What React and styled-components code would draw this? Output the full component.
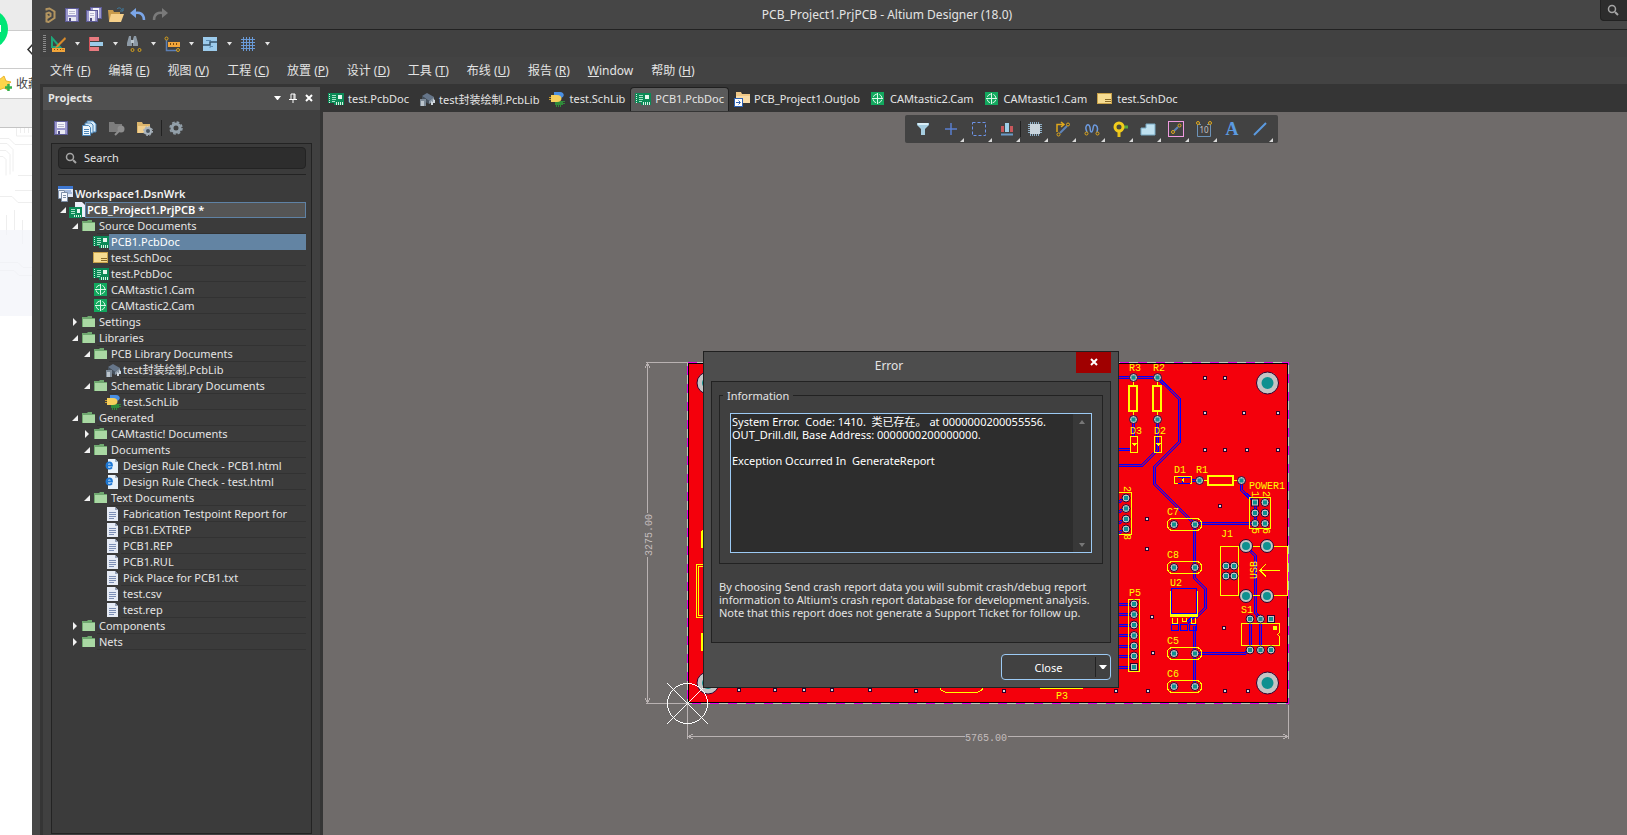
import React from 'react';
import styled, { createGlobalStyle, css } from 'styled-components';

const GlobalStyle = createGlobalStyle`
  * { box-sizing: border-box; }
  html, body, #root { height: 100%; }
  body {
    margin: 0;
    overflow: hidden;
    background: #ffffff;
    font-family: "Noto Sans", "Noto Sans CJK SC", sans-serif;
    font-size: 11px;
    color: #e4e4e4;
  }
  button, input, textarea { font: inherit; color: inherit; }
  svg { display: block; flex: none; }
`;

/* ---------- shell ---------- */

const Desktop = styled.div`
  display: flex;
  height: 100vh;
`;

const BrowserStrip = styled.aside`
  flex: none;
  width: 32px;
  overflow: hidden;
  background: #ffffff;
`;

const AppWindow = styled.div`
  position: relative;
  flex: 1;
  min-width: 0;
  display: flex;
  flex-direction: column;
  padding-left: 8px;
  background: #464646;
`;

const TitleBar = styled.header`
  flex: none;
  display: flex;
  align-items: center;
  height: 30px;
  border-bottom: 1px solid #222222;
`;

const QuickAccess = styled.div`
  display: flex;
  gap: 2px;
`;

const IconButton = styled.button`
  display: flex;
  align-items: center;
  justify-content: center;
  width: ${(p) => p.$w || 20}px;
  height: 20px;
  padding: 0;
  border: 0;
  background: none;
`;

const WindowTitle = styled.h1`
  flex: 1;
  margin: 0;
  padding-left: 4px;
  text-align: center;
  font-size: 12px;
  font-weight: 400;
`;

const GlobalSearch = styled.button`
  align-self: flex-start;
  display: flex;
  align-items: center;
  width: 27px;
  height: 21px;
  padding: 0 0 0 6px;
  border: 1px solid #222222;
  border-width: 0 0 1px 1px;
  border-radius: 0 0 0 4px;
  background: #2d2d2d;
`;

const ToolRow = styled.div`
  flex: none;
  display: flex;
  align-items: center;
  height: 27px;
  padding-left: 3px;
  background: #414141;
`;

const Grip = styled.span`
  width: 3px;
  height: 17px;
  margin-right: 2px;
  background: repeating-linear-gradient(#8a8a8a 0 1px, transparent 1px 2px);
`;

const ToolGroup = styled.div`
  display: flex;
  align-items: center;
  width: 38px;
`;

const MenuBar = styled.nav`
  flex: none;
  display: flex;
  align-items: center;
  gap: 18px;
  height: 27px;
  padding-left: 10px;
  background: #434343;
`;

const MenuButton = styled.button`
  padding: 0;
  border: 0;
  background: none;
  font-size: 12px;
  line-height: 16px;
  text-align: left;
  white-space: pre;
`;

const Workbench = styled.div`
  flex: 1;
  min-height: 0;
  display: flex;
  background: #353535;
`;

/* ---------- projects panel ---------- */

const Panel = styled.section`
  flex: none;
  display: flex;
  flex-direction: column;
  width: 277px;
  margin: 3px 3px 0 3px;
  background: #404040;
`;

const PanelHeader = styled.header`
  flex: none;
  display: flex;
  align-items: center;
  height: 23px;
  padding: 0 3px 2px 5px;
  background: #505050;
`;

const PanelTitle = styled.h2`
  flex: 1;
  margin: 0;
  font-size: 11px;
  font-weight: 700;
`;

const PanelTools = styled.div`
  flex: none;
  display: flex;
  align-items: center;
  gap: 8px;
  height: 33px;
  padding: 3px 0 0 8px;
`;

const Divider = styled.span`
  width: 1px;
  height: 16px;
  margin: 0 -2px;
  background: #222222;
`;

const PanelBody = styled.div`
  flex: 1;
  min-height: 0;
  margin: 0 8px 1px 8px;
  padding: 3px 5px 0 6px;
  border: 1px solid #232323;
  background: #3b3b3b;
`;

const SearchField = styled.label`
  display: flex;
  align-items: center;
  gap: 7px;
  height: 22px;
  padding: 0 6px 1px;
  border: 1px solid #232323;
  border-radius: 4px;
  background: #2d2d2d;
  input {
    width: 100%;
    padding: 0;
    border: 0;
    outline: 0;
    background: none;
  }
  input::placeholder { color: #e4e4e4; opacity: 1; }
`;

const Rule = styled.hr`
  height: 1px;
  margin: 5px 0 11px;
  border: 0;
  background: #232323;
`;

const Tree = styled.ul`
  margin: 0 0 0 -1px;
  padding: 0;
  list-style: none;
`;

const TreeRow = styled.li`
  display: flex;
  height: 16px;
  padding-left: ${(p) => Math.max(0, p.$depth - 1) * 12}px;
`;

const Twisty = styled.span`
  flex: none;
  display: flex;
  align-items: center;
  width: 12px;
  padding-left: 3px;
`;

const TreeLabel = styled.span`
  flex: 1;
  min-width: 0;
  padding-left: 2px;
  border-bottom: 1px solid #323232;
  line-height: 16px;
  white-space: nowrap;
  ${(p) => p.$bold && css`font-weight: 600; border-color: transparent; color: #f2f2f2;`}
  ${(p) => p.$state === 'selected' && css`background: #6384a3; border-color: #6384a3; color: #ffffff;`}
  ${(p) => p.$state === 'current' && css`
    padding-left: 1px;
    border: 1px solid #5f82a5;
    background: #555555;
    line-height: 14px;
    color: #ffffff;
  `}
`;

/* ---------- document area ---------- */

const Documents = styled.main`
  flex: 1;
  min-width: 0;
  display: flex;
  flex-direction: column;
`;

const TabStrip = styled.div`
  flex: none;
  display: flex;
  align-items: flex-end;
  height: 28px;
  padding-bottom: 1px;
`;

const Tab = styled.button`
  display: flex;
  align-items: center;
  gap: 4px;
  height: 24px;
  padding: 0 4px 2px;
  border: 1px solid ${(p) => (p.$active ? '#202020' : 'transparent')};
  border-bottom: 0;
  border-radius: 4px 4px 0 0;
  background: ${(p) => (p.$active ? '#5a5a5a' : 'none')};
  white-space: nowrap;
`;

const Canvas = styled.div`
  position: relative;
  flex: 1;
  min-height: 0;
  overflow: hidden;
  background: #6f6b6a;
`;

const ActiveBar = styled.div`
  position: absolute;
  top: 3px;
  left: 582px;
  display: flex;
  width: 373px;
  height: 28px;
  padding: 0 4px;
  border-radius: 2px;
  background: #424242;
`;

const ActiveTool = styled.button`
  position: relative;
  flex: 1;
  display: flex;
  align-items: center;
  justify-content: center;
  padding: 0;
  border: 0;
  background: none;
  &::before {
    content: "";
    display: ${(p) => (p.$last ? 'block' : 'none')};
    position: absolute;
    right: 0;
    width: 1px;
    height: 16px;
    background: #222222;
  }
  &::after {
    content: "";
    display: ${(p) => (p.$more ? 'block' : 'none')};
    position: absolute;
    right: 1px;
    bottom: 1px;
    border: 2px solid transparent;
    border-right-color: #d8d8d8;
    border-bottom-color: #d8d8d8;
  }
`;

/* ---------- error dialog ---------- */

const Dialog = styled.div`
  position: absolute;
  top: 351px;
  left: 671px;
  display: flex;
  flex-direction: column;
  width: 416px;
  padding: 0 7px 7px;
  border: 1px solid #202020;
  background: #4d4d4d;
`;

const DialogTitle = styled.header`
  display: flex;
  height: 29px;
  h2 {
    flex: 1;
    margin: 0;
    padding-right: 9px;
    font-size: 12px;
    font-weight: 400;
    line-height: 27px;
    text-align: center;
  }
`;

const CloseBox = styled.button`
  display: flex;
  align-items: center;
  justify-content: center;
  width: 35px;
  height: 21px;
  padding: 0 0 1px;
  border: 0;
  background: #a00000;
`;

const DialogBody = styled.div`
  padding: 7px 7px 23px;
  border: 1px solid #222222;
  background: #404040;
  color: #e4e4e4;
  p {
    margin: 16px 0 0;
    line-height: 13px;
    white-space: nowrap;
  }
`;

const InfoGroup = styled.fieldset`
  margin: 0;
  padding: 11px 10px 10px;
  border: 1px solid #222222;
  legend {
    height: 13px;
    margin-left: -7px;
    padding: 0 4px;
    line-height: 13px;
  }
`;

const Report = styled.div`
  display: flex;
  height: 140px;
  border: 1px solid #9ccaf4;
  background: #2d2d2d;
  textarea {
    flex: 1;
    min-width: 0;
    padding: 1px;
    border: 0;
    outline: 0;
    resize: none;
    overflow: hidden;
    background: none;
    color: #ffffff;
    line-height: 13px;
  }
`;

const ScrollTrack = styled.div`
  display: flex;
  flex-direction: column;
  justify-content: space-between;
  width: 18px;
  background: #383838;
`;

const ScrollButton = styled.button`
  display: flex;
  align-items: center;
  justify-content: center;
  height: 15px;
  padding: 0;
  border: 0;
  background: none;
`;

const DialogActions = styled.footer`
  display: flex;
  justify-content: flex-end;
  margin-top: 11px;
`;

const SplitButton = styled.div`
  display: flex;
  width: 110px;
  height: 26px;
  border: 1px solid #9ccaf4;
  border-radius: 4px;
  background: #414141;
  button {
    flex: 1;
    padding: 0;
    border: 0;
    background: none;
    color: #ffffff;
  }
  button + button {
    flex: none;
    display: flex;
    align-items: center;
    justify-content: center;
    width: 15px;
    margin: 2px 0;
    border-left: 1px solid #222222;
  }
`;

/* ---------- icons ---------- */

const Svg = ({ w = 16, h = 16, children }) => (
  <svg width={w} height={h} viewBox={`0 0 ${w} ${h}`} fill="none" aria-hidden="true">{children}</svg>
);

const Floppy = ({ x = 0, y = 0, s = 14 }) => (
  <g transform={`translate(${x} ${y})`}>
    <rect x="0.5" y="0.5" width={s - 1} height={s - 1} fill="#9a97cc" stroke="#5d5b96" />
    <rect x="3" y="1" width={s - 6} height="6" fill="#f4f4fa" />
    <path d={`M4 3.5h${s - 8}M4 5.5h${s - 8}`} stroke="#b9b9cf" />
    <rect x="3" y={s - 5} width={s - 6} height="4" fill="#e8e8f2" />
    <rect x="4" y={s - 4} width="2" height="3" fill="#4d4b7d" />
  </g>
);
const SaveIcon = () => <Svg><Floppy x={1} y={1} /></Svg>;
const SaveAllIcon = () => <Svg><Floppy x={4} y={0} s={12} /><Floppy x={0} y={3} s={12} /></Svg>;
const LogoIcon = () => (
  <Svg>
    <path d="M4.500 3.500V2l3-.500 5 3v6.500l-6 4-2-.500v-3l4-2.500V6.500L7 5.500l-2.500 1v3l2-.500" stroke="#b39560" strokeWidth="2" />
  </Svg>
);
const OpenIcon = () => (
  <Svg>
    <path d="M0 3h5l1 2h6v9H1z" fill="#c99b4c" /><path d="M3 7h13l-3 8H1z" fill="#f6d08a" />
    <path d="M9 2c2-2 4-1 5 1M15 1v3h-3" stroke="#3f7fa6" />
  </Svg>
);
const UndoIcon = () => (
  <Svg><path d="M5 6c5-1 9 1 9 7" stroke="#7ba6e8" strokeWidth="2.500" /><path d="M0 6l6-5v10z" fill="#7ba6e8" /></Svg>
);
const RedoIcon = () => (
  <Svg><path d="M11 6c-5-1-9 1-9 7" stroke="#7a7a7a" strokeWidth="2.500" /><path d="M16 6l-6-5v10z" fill="#7a7a7a" /></Svg>
);
const DraftIcon = () => (
  <Svg>
    <path d="M2 2v9h8z" stroke="#1fa67a" strokeWidth="2" /><path d="M15 1L7 9l-2 3 3-1 8-8z" fill="#d98b2b" />
    <rect x="2" y="12" width="13" height="4" fill="#f2a53a" /><path d="M4.500 13v1M7.500 13v1M10.500 13v1M13 13v1" stroke="#7b4a0c" />
  </Svg>
);
const AlignIcon = () => (
  <Svg>
    <rect x="2" y="1" width="9" height="4" fill="#e87b80" /><rect x="2" y="6" width="13" height="4" fill="#9ccbe8" />
    <rect x="2" y="11" width="9" height="4" fill="#e87b80" /><path d="M1.500 1v14" stroke="#d7555c" />
  </Svg>
);
const FindIcon = () => (
  <Svg>
    <path d="M3 0h2v3l1 4v3H1V7zM8 0h2l2 7v3H7V3z" fill="#8d9aa6" /><path d="M5 4h3v3H5z" fill="#b9c4cd" />
    <circle cx="6.500" cy="14" r="1.500" stroke="#d9a21c" /><circle cx="13.500" cy="14" r="1.500" stroke="#d9a21c" />
  </Svg>
);
const MeasureIcon = () => (
  <Svg>
    <path d="M2.500 4v10.500H13" stroke="#5c7fb5" strokeWidth="1.500" /><rect x="4" y="6" width="12" height="5" fill="#f2a53a" />
    <path d="M6.500 7v2M9.500 7v2M12.500 7v2" stroke="#7b4a0c" />
    <circle cx="2.500" cy="2.500" r="1.500" stroke="#d9a21c" /><circle cx="14" cy="14" r="1.500" stroke="#d9a21c" />
  </Svg>
);
const RoomIcon = () => (
  <Svg>
    <rect x="1" y="1" width="14" height="14" fill="#9ccbec" />
    <path d="M15 6H8v3H1" stroke="#35536b" strokeWidth="1.500" />
    <path d="M4 4.500h5M11 10.500H8V12" stroke="#5c8db5" />
  </Svg>
);
const GridIcon = () => (
  <Svg><path d="M1 3.500h14M1 6.500h14M1 9.500h14M1 12.500h14M3.500 1v14M6.500 1v14M9.500 1v14M12.500 1v14" stroke="#6a9bd8" /></Svg>
);
const ArrowDown = ({ fill = '#e4e4e4', w = 5 }) => (
  <Svg w={w} h={4}><path d={`M0 0h${w}L${w / 2} ${w / 2 + 1}z`} fill={fill} /></Svg>
);
const PinIcon = () => <Svg w={8} h={10}><path d="M2 1h4v5M2 1v5M0 6.500h8M4 6v4M5 1v5" stroke="#fff" /></Svg>;
const CrossIcon = ({ s = 8 }) => (
  <Svg w={s} h={s}><path d={`M1 1l${s - 2} ${s - 2}M${s - 1} 1L1 ${s - 1}`} stroke="#fff" strokeWidth="2" /></Svg>
);
const LensIcon = ({ s = 12 }) => (
  <Svg w={s} h={s}><circle cx="5" cy="5" r="3.500" stroke="#a5a5a5" strokeWidth="1.500" /><path d="M8 8l3 3" stroke="#a5a5a5" strokeWidth="2" /></Svg>
);
const DocsIcon = () => (
  <Svg>
    <path d="M6 1h6l3 3v8H6z" fill="#d9ecf9" stroke="#4d86b8" /><path d="M4 3h6l2 2v8H4z" fill="#d9ecf9" stroke="#4d86b8" />
    <path d="M1.500 5.500h6l2 2v8h-8z" fill="#eef7fd" stroke="#4d86b8" /><path d="M3 9.500h5M3 11.500h5M3 13.500h5" stroke="#4d86b8" />
  </Svg>
);
const FolderLensIcon = () => (
  <Svg><path d="M0 2h5l1 2h7v8H0z" fill="#7c7c7c" /><circle cx="12" cy="9" r="3.500" fill="#8e8e8e" /><path d="M10 11l-4 4" stroke="#8e8e8e" strokeWidth="2" /></Svg>
);
const FolderGearIcon = () => (
  <Svg>
    <path d="M0 2h5l1 2h7v9H0z" fill="#dcb56c" /><path d="M1 6h12v7H1z" fill="#f2cf8c" />
    <circle cx="11" cy="11" r="3" fill="#4a5560" stroke="#a9b4be" strokeWidth="2" /><circle cx="11" cy="11" r="4.500" stroke="#a9b4be" strokeDasharray="2 1.500" />
  </Svg>
);
const GearIcon = () => (
  <Svg><circle cx="8" cy="8" r="4" stroke="#93a0aa" strokeWidth="3" /><circle cx="8" cy="8" r="6" stroke="#93a0aa" strokeWidth="1.500" strokeDasharray="2.700 2" /></Svg>
);
const PcbIcon = () => (
  <Svg>
    <rect x="0" y="2" width="16" height="10" fill="#0c8a57" /><rect x="6" y="12" width="10" height="2" fill="#0c8a57" />
    <path d="M1.500 3v9" stroke="#d5f2e4" strokeDasharray="1 1" />
    <path d="M4 4.500h4M4 6.500h4M4 8.500h4M4 10.500h3" stroke="#a8e4c8" /><rect x="10" y="4" width="4" height="4" fill="#e6f7ef" />
    <path d="M8 12.500h8" stroke="#d5f2e4" strokeWidth="3" strokeDasharray="1 1" />
  </Svg>
);
const ProjectIcon = () => (
  <Svg><path d="M6 0h7l3 3v12H6z" fill="#eef0fa" /><g transform="translate(-1 3)"><rect x="1" y="2" width="13" height="11" fill="#0c8a57" /><path d="M3 4.500h4M3 6.500h4M3 8.500h4" stroke="#a8e4c8" /><rect x="9" y="4" width="3" height="4" fill="#e6f7ef" /><path d="M6 11h8" stroke="#d5f2e4" strokeWidth="2" strokeDasharray="1 1" /></g></Svg>
);
const PcbLibIcon = () => (
  <Svg>
    <path d="M3 5l5-3 7 4-5 4z" fill="#66768a" /><path d="M3 5l7 5v3L3 9z" fill="#46525f" /><path d="M10 10l5-4v4l-5 3z" fill="#8997a5" />
    <path d="M12 10l2 1v3h-2z" fill="#cfd7de" /><path d="M14 8l2 1v3h-2z" fill="#cfd7de" />
    <path d="M1 8h6v7H1z" fill="#7d8a97" /><path d="M2 10h3v5H2z" fill="#bcc5cd" />
  </Svg>
);
const SchLibIcon = () => (
  <Svg>
    <path d="M6 10h8v4H6z" fill="#2f8a3a" /><path d="M7.500 13v3M9.500 13v3M11.500 13v3M14 10.500h2M14 12.500h2" stroke="#2f8a3a" />
    <path d="M5 1h6c5 0 5 6 0 6H5z" fill="#4a8fe2" /><path d="M2 4h6c6 0 6 7 0 7H2z" fill="#f5cf5c" /><path d="M0 6.500h2M0 8.500h2" stroke="#c99b2c" />
  </Svg>
);
const OutJobIcon = () => (
  <Svg>
    <path d="M2 1h5l1 2h8v9H2z" fill="#f0c887" /><path d="M2 5h14v7H2z" fill="#f8dba8" />
    <rect x="0.500" y="7.500" width="8" height="8" fill="#fff" stroke="#2d62b5" /><path d="M2 11.500h4M4.500 9.500l2 2-2 2" stroke="#2d62b5" />
  </Svg>
);
const CamIcon = () => (
  <Svg>
    <rect x="1" y="1" width="13" height="13" fill="#12a85e" /><circle cx="7.500" cy="7.500" r="4.500" stroke="#d9f7e7" strokeDasharray="4.500 2.600" strokeDashoffset="-1.300" />
    <path d="M7.500 2v11M2 7.500h11" stroke="#d9f7e7" />
  </Svg>
);
const SchDocIcon = () => (
  <Svg><rect x="0.500" y="2.500" width="14" height="10" fill="#f7dd92" stroke="#c9a24a" /><path d="M8 8.500h6M8 10.500h6" stroke="#8a6c28" /></Svg>
);
const FolderIcon = () => (
  <Svg><path d="M1 3h5l1-1h4v2h3v9H1z" fill="#6fa86f" /><path d="M2 5h12v8H2z" fill="#a9d8a3" /></Svg>
);
const HtmlIcon = () => (
  <Svg>
    <path d="M3 1h7l3 3v11H3z" fill="#e8f2fb" /><path d="M10 1v3h3z" fill="#9fb4c8" />
    <path d="M1.500 7.500h5.500c0-4-5.500-4-5.500 0s4 3.500 5.500 1.800" stroke="#1c78d6" strokeWidth="1.800" />
  </Svg>
);
const TextIcon = () => (
  <Svg><path d="M2 1h8l3 3v11H2z" fill="#e6ebf5" /><path d="M10 1v3h3z" fill="#93a0b8" /><path d="M4 6.500h7M4 8.500h7M4 10.500h7M4 12.500h5" stroke="#7d8fb5" /></Svg>
);
const WorkspaceIcon = () => (
  <Svg>
    <rect x="1" y="0" width="15" height="11" fill="#dfe8f6" /><rect x="1" y="0" width="15" height="3" fill="#3d77d1" />
    <path d="M8 5h6M10 7h5" stroke="#6b8cc0" /><path d="M1.500 4.500h6v8h-6z" fill="#eef3fa" stroke="#7d8fa8" /><path d="M4.500 6.500h6v9h-6z" fill="#f5f8fc" stroke="#7d8fa8" />
    <path d="M6 9.500h3M6 11.500h3" stroke="#7d8fa8" />
  </Svg>
);
const OpenTwisty = () => <Svg w={6} h={6}><path d="M6 0v6H0z" fill="#f2f2f2" /></Svg>;
const ClosedTwisty = () => <Svg w={6} h={8}><path d="M1 0l4 4-4 4z" fill="#f2f2f2" /></Svg>;

const FilterIcon = () => <Svg><path d="M2 2h12v2l-4 4v6H6V8L2 4z" fill="#a6cde0" /><path d="M3 2h10v2H3z" fill="#d9eef7" /></Svg>;
const PlusIcon = () => <Svg><path d="M8 2v12M2 8h12" stroke="#5a7fd0" strokeWidth="1.500" /></Svg>;
const SelectIcon = () => <Svg><rect x="1.500" y="1.500" width="13" height="13" stroke="#6d93e6" strokeDasharray="3 2" /></Svg>;
const DistributeIcon = () => (
  <Svg><path d="M2 5h3v6H2zM11 5h3v6h-3z" fill="#c9585c" /><path d="M6 2h4v9H6z" fill="#9fd0ea" /><path d="M2 13.500h12" stroke="#6a9bc8" strokeWidth="2" /></Svg>
);
const ChipIcon = () => (
  <Svg><rect x="3" y="3" width="10" height="10" fill="#c9d4dc" /><path d="M3 2h10M3 14h10M2 3v10M14 3v10" stroke="#8fb0c8" strokeWidth="2" strokeDasharray="1 1" /></Svg>
);
const RouteIcon = () => (
  <Svg><path d="M2 11V3.500h6M6 1l3 2.500L6 6" stroke="#e0a81c" strokeWidth="1.500" /><path d="M5 12l7-7" stroke="#5f83b8" strokeWidth="2" /><circle cx="3.500" cy="13.500" r="1.500" stroke="#e0a81c" /><circle cx="13" cy="3.500" r="1.500" stroke="#e0a81c" /></Svg>
);
const WaveIcon = () => (
  <Svg><path d="M3 11C0 5 4 2 5.500 5s0 6 2 6 1-7 3-7 4 2 2.500 7" stroke="#6d9be0" strokeWidth="1.500" /><circle cx="2.500" cy="12.500" r="1.500" stroke="#e0a81c" /><circle cx="13.500" cy="12.500" r="1.500" stroke="#e0a81c" /></Svg>
);
const ViaIcon = () => (
  <Svg><path d="M10 6h6" stroke="#58a83c" strokeWidth="3" /><path d="M7 9v7" stroke="#e8c21c" strokeWidth="3" /><circle cx="7" cy="6" r="4" stroke="#f2cc1c" strokeWidth="3" fill="#4a4a3a" /></Svg>
);
const PolygonIcon = () => <Svg><path d="M1 14V7h5V3h9v11z" fill="#bfe1f0" stroke="#79aac4" /></Svg>;
const KeepoutIcon = () => (
  <Svg><rect x="0.500" y="0.500" width="15" height="15" stroke="#f09ae0" /><path d="M6 10l4-4" stroke="#5f83b8" strokeWidth="2" /><circle cx="5" cy="11" r="1.500" stroke="#e0a81c" /><circle cx="11.500" cy="4.500" r="1.500" stroke="#e0a81c" /></Svg>
);
const DimensionIcon = () => (
  <Svg><path d="M1.500 4v11.500h13V4M3 3.500h2M11 3.500h2" stroke="#6d93b8" /><circle cx="2" cy="2" r="1.500" stroke="#e0a81c" /><circle cx="14" cy="2" r="1.500" stroke="#e0a81c" /><text x="8" y="12" textAnchor="middle" fontSize="8" fill="#c4c4c4">10</text></Svg>
);
const LetterIcon = () => <Svg w={20} h={24}><text x="10" y="18" textAnchor="middle" fontFamily="Liberation Serif, serif" fontWeight="700" fontSize="18" fill="#5b9ae0">A</text></Svg>;
const LineIcon = () => <Svg><path d="M2 14L14 2" stroke="#5b9ae0" strokeWidth="2" /></Svg>;

/* ---------- board drawing ---------- */

const YELLOW = '#ffff00';
const RED = '#f4000c';

const Board = styled.svg`
  position: absolute;
  inset: 0;
  width: 100%;
  height: 100%;
`;

const Trace = ({ d }) => (
  <>
    <path d={d} stroke="#0000ff" strokeWidth="3" fill="none" />
    <path d={d} stroke="#b00050" strokeWidth="1" fill="none" />
  </>
);
const Pad = ({ x, y, square }) => (
  <>
    {square
      ? <rect x={x - 3.5} y={y - 3.5} width="7" height="7" fill="#c4c4c4" stroke="#30002c" />
      : <circle cx={x} cy={y} r="4" fill="#c4c4c4" stroke="#30002c" />}
    <rect x={x - 2} y={y - 2} width="4" height="4" fill="#0f9090" />
  </>
);
const Hole = ({ x, y, r = 11, inner = 6 }) => (
  <>
    <circle cx={x} cy={y} r={r} fill="#c4c4c4" stroke="#30002c" />
    <circle cx={x} cy={y} r={inner} fill="#0f9090" />
  </>
);
const Via = ({ x, y }) => (
  <>
    <rect x={x - 2} y={y - 2} width="4" height="4" fill="#30002c" />
    <rect x={x - 1} y={y - 1} width="2" height="2" fill="#d8d8d8" />
  </>
);

const traces = [
  'M1119 377.5h38', 'M1158 378l21.500 21v43l-25 25v17l40 40', 'M1194.500 524v54l11 11v19l-10 10', 'M1194.500 626v60',
  'M1133.500 420v16', 'M1157.500 420v32', 'M1119 449.500h12', 'M1119 465.500h23l15-15', 'M1191 480.500h8',
  'M1241.500 481v9l13 12', 'M1195 523.500h60', 'M1255.500 502v22', 'M1195 653.500h50l5-3', 'M1250.500 619v31', 'M1260.500 619v31',
  'M1247 548l8.500 8v57l5 6', 'M1197 613l-10 10',
  ...[604, 614, 625, 635, 646, 656, 667].map((y) => `M1119 ${y}.5h14`),
  ...[498, 508, 519, 529].map((y) => `M1119 ${y + 4}l6-4`),
];
const pads = [
  [1133.5, 377.5], [1157.5, 377.5], [1133.5, 419.5], [1157.5, 419.5], [1199.5, 480.5], [1241.5, 480.5],
  [1255, 502.5, 1], [1265, 502.5], [1255, 513], [1265, 513], [1255, 523.5], [1265, 523.5],
  ...[524.5, 567.5, 653.5, 686.5].flatMap((y) => [[1174, y], [1195, y]]),
  [1226, 566], [1234, 566], [1226, 576], [1234, 576],
  [1250, 619], [1260.5, 619], [1271, 619, 1], [1250, 650], [1260.5, 650], [1271, 650],
  ...[604, 614.5, 625, 635.5, 646, 656].map((y) => [1134, y]), [1134, 667, 1],
  [1126, 498], [1126, 508.5], [1126, 519], [1126, 529],
];
const vias = [
  [1205, 378], [1225, 378], [1205, 413], [1244, 413], [1278, 413], [1205, 450], [1225, 450], [1247, 450], [1278, 450],
  [1220, 506], [1147, 519], [1147, 549], [1152, 617], [1224, 628], [1153, 653], [1148, 691], [1116, 691], [1225, 691], [1248, 691],
  [739, 690], [775, 690], [804, 690], [832, 690], [870, 690], [916, 691], [1004, 691],
];
const silkLabels = [
  ['R3', 1129, 371], ['R2', 1153, 371], ['D3', 1130, 434], ['D2', 1154, 434], ['D1', 1174, 473], ['R1', 1196, 473],
  ['POWER1', 1249, 489], ['C7', 1167, 515], ['J1', 1221, 537], ['C8', 1167, 558], ['U2', 1170, 586], ['P5', 1129, 596],
  ['S1', 1241, 613], ['C5', 1167, 644], ['C6', 1167, 677], ['P3', 1056, 699],
];
const turnedLabels = [['1', 1252, 494], ['2', 1263, 494], ['5', 1252, 531], ['6', 1263, 531], ['2', 1124, 489], ['8', 1124, 537]];

const BoardDrawing = () => (
  <Board role="img" aria-label="PCB layout">
    <g transform="translate(-323 -112)" fontFamily="Liberation Mono, monospace" fontSize="10" shapeRendering="crispEdges">
      <rect x="688.500" y="363.500" width="599" height="339" fill={RED} stroke="#000" />
      <rect x="687.500" y="362.500" width="601" height="341" fill="none" stroke="#c8c0c0" />
      <rect x="687.500" y="362.500" width="601" height="341" fill="none" stroke="#e800e8" strokeDasharray="9 9" />
      {traces.map((d) => <Trace key={d} d={d} />)}

      <g fill="none" stroke={YELLOW} strokeWidth="1">
        <path d="M1133.500 381v5M1133.500 411v5M1157.500 381v5M1157.500 411v5" />
        <rect x="1129" y="386" width="8" height="25" strokeWidth="2" fill={RED} />
        <rect x="1153" y="386" width="8" height="25" strokeWidth="2" fill={RED} />
        <rect x="1130.500" y="436.500" width="7" height="16" />
        <rect x="1154.500" y="436.500" width="7" height="16" />
        <rect x="1174.500" y="476.500" width="17" height="7" />
        <path d="M1204 480.500h4M1234 480.500h4" />
        <rect x="1208" y="476" width="25" height="9" strokeWidth="2" />
        <rect x="1249.500" y="497.500" width="21" height="31" />
        {[518.5, 561.5, 647.5, 680.5].map((y) => <rect key={y} x="1167.500" y={y} width="34" height="12" rx="5" />)}
        <path d="M1220.500 546.500h67v49h-67zM1238.500 546v49" />
        <path d="M1260 570.500h20M1266 564l-6 6.500 6 6" />
        <path d="M1279.500 623.500h-38v22h38v-9l-2-2 2-2z" />
        <rect x="1128.500" y="599.500" width="11" height="72" />
        <path d="M1119 492.500h12.500v42H1119" />
        <path d="M1172.500 618v5h5v-5M1182.500 618v3h4v-3M1191.500 618v5h4v-5" />
        <path d="M696.500 564.500h40v53h-40zM698.500 566.500h40v49h-40z" />
        <path d="M701.500 531v17M704.500 531h-3M701.500 633v18M703 536v8" strokeWidth="2" />
        <rect x="938.500" y="672.500" width="46" height="20" rx="9" />
        <path d="M1040 688.500h43" />
      </g>
      <rect x="1170" y="614" width="28" height="3" fill={YELLOW} />
      <path d="M1170.500 591v24M1197.500 591v24" stroke={YELLOW} />
      <rect x="1171.500" y="588.500" width="25" height="25" fill={RED} stroke="#0000ff" />
      <g fill="none" stroke="#0000ff">
        <path d="M1171.500 624.500h7v6h-7zM1180.500 624.500h7v6h-7zM1189.500 624.500h7v6h-7z" />
        <path d="M1182.500 477v6M1178 477.500h12M1178 483.500h12" />
      </g>
      <path d="M1131 443h6l-3 3zM1155 443h6l-3 3zM1184 477v6l-3-3z" fill={YELLOW} />
      <circle cx="1275" cy="628" r="2.500" fill={YELLOW} />

      <g shapeRendering="auto">
        {pads.map(([x, y, square]) => <Pad key={`${x}-${y}`} x={x} y={y} square={square} />)}
        {vias.map(([x, y]) => <Via key={`${x}-${y}`} x={x} y={y} />)}
        {[[708, 383], [1267.5, 383], [708, 683], [1267.5, 683]].map(([x, y]) => <Hole key={`${x}-${y}`} x={x} y={y} />)}
        {[[1246, 546], [1267, 546], [1246, 596], [1267, 596]].map(([x, y]) => <Hole key={`${x}-${y}`} x={x} y={y} r={6.5} inner={4} />)}
      </g>

      <g fill={YELLOW}>
        {silkLabels.map(([t, x, y]) => <text key={t} x={x} y={y}>{t}</text>)}
        {turnedLabels.map(([t, x, y]) => <text key={`${t}-${x}-${y}`} transform={`translate(${x} ${y - 3}) rotate(90)`}>{t}</text>)}
        <text transform="translate(1257 579) rotate(-90)">USB</text>
      </g>

      <g fill="none" stroke="#b9b2b2">
        <path d="M646 362.500h42M646 703.500h42M647.500 363v150M647.500 557v146" />
        <path d="M645 368l2.500-5 2.500 5M645 698l2.500 5 2.500-5" />
        <path d="M687.500 704v35M1288.500 705v34M688 736.500h277M1008 736.500h280" />
        <path d="M693 734l-5 2.500 5 2.500M1283 734l5 2.500-5 2.500" />
      </g>
      <g fill="#c4bdbd">
        <text x="965" y="741">5765.00</text>
        <text transform="translate(652 556) rotate(-90)">3275.00</text>
      </g>
      <g fill="none" stroke="#ffffff">
        <circle cx="687.500" cy="703.500" r="20" />
        <path d="M667 683l41 41M708 683l-41 41" />
      </g>
    </g>
  </Board>
);

const BrowserPage = () => (
  <BrowserStrip aria-hidden="true">
    <svg width="32" height="835" viewBox="0 0 32 835" fill="none">
      <rect width="32" height="30" fill="#ebebeb" />
      <path d="M0 30.500h32M0 68.500h32M0 98.500h32" stroke="#cccccc" />
      <rect y="99" width="32" height="28" fill="#f0f0f0" />
      <path d="M0 127.500h32" stroke="#c4c4c4" />
      <circle cx="-12" cy="29" r="20" fill="#00e676" />
      <path d="M0 25v7" stroke="#fff" strokeWidth="2" />
      <path d="M33 44l-5 5.500 5 5.500" stroke="#333" strokeWidth="1.500" />
      <path d="M4 76l2 5 5 1-4 3 1 5-4-2-5 2V80z" fill="#ffd54a" stroke="#eab530" />
      <path d="M8.500 84v7M5 87.500h7" stroke="#35b04a" strokeWidth="2.500" />
      <text x="16" y="88" fontSize="12" fill="#444444">收藏</text>
      <path d="M0 138.500h9l6 6h17M0 143.500h7l6 6v22M16.500 128v8h16M20.500 128v5M24.500 128v5M28.500 128v5M0 150.500h6l4 4v20M0 156.500h3l3 3v16M18 175.500h14M15 190.500h17M0 196.500h12l6 6h14M6.500 215v20M14.500 210v20M22.500 220v24M0 262.500h18l5 5h9M0 270.500h14l5 5h13" stroke="#eeeeee" />
      <rect y="230" width="32" height="86" fill="#f2f4f9" opacity="0.700" />
    </svg>
  </BrowserStrip>
);

/* ---------- data ---------- */

const quickAccess = [
  ['Altium', LogoIcon], ['Save', SaveIcon], ['Save all', SaveAllIcon], ['Open', OpenIcon], ['Undo', UndoIcon], ['Redo', RedoIcon],
];
const utilities = [
  ['Drafting', DraftIcon], ['Align', AlignIcon], ['Find', FindIcon], ['Dimensions', MeasureIcon], ['Rooms', RoomIcon], ['Grids', GridIcon],
];
const menus = [
  ['文件 (', 'F', ')'], ['编辑 (', 'E', ')'], ['视图 (', 'V', ')'], ['工程 (', 'C', ')'], ['放置 (', 'P', ')'], ['设计 (', 'D', ')'],
  ['工具 (', 'T', ')'], ['布线 (', 'U', ')'], ['报告 (', 'R', ')'], ['', 'W', 'indow'], ['帮助 (', 'H', ')'],
];
const tabs = [
  ['test.PcbDoc', PcbIcon], ['test封装绘制.PcbLib', PcbLibIcon], ['test.SchLib', SchLibIcon], ['PCB1.PcbDoc', PcbIcon],
  ['PCB_Project1.OutJob', OutJobIcon], ['CAMtastic2.Cam', CamIcon], ['CAMtastic1.Cam', CamIcon], ['test.SchDoc', SchDocIcon],
];
const tree = [
  [0, 'Workspace1.DsnWrk', WorkspaceIcon],
  [1, 'PCB_Project1.PrjPCB *', ProjectIcon, 'open'],
  [2, 'Source Documents', FolderIcon, 'open'],
  [3, 'PCB1.PcbDoc', PcbIcon],
  [3, 'test.SchDoc', SchDocIcon],
  [3, 'test.PcbDoc', PcbIcon],
  [3, 'CAMtastic1.Cam', CamIcon],
  [3, 'CAMtastic2.Cam', CamIcon],
  [2, 'Settings', FolderIcon, 'closed'],
  [2, 'Libraries', FolderIcon, 'open'],
  [3, 'PCB Library Documents', FolderIcon, 'open'],
  [4, 'test封装绘制.PcbLib', PcbLibIcon],
  [3, 'Schematic Library Documents', FolderIcon, 'open'],
  [4, 'test.SchLib', SchLibIcon],
  [2, 'Generated', FolderIcon, 'open'],
  [3, 'CAMtastic! Documents', FolderIcon, 'closed'],
  [3, 'Documents', FolderIcon, 'open'],
  [4, 'Design Rule Check - PCB1.html', HtmlIcon],
  [4, 'Design Rule Check - test.html', HtmlIcon],
  [3, 'Text Documents', FolderIcon, 'open'],
  [4, 'Fabrication Testpoint Report for', TextIcon],
  [4, 'PCB1.EXTREP', TextIcon],
  [4, 'PCB1.REP', TextIcon],
  [4, 'PCB1.RUL', TextIcon],
  [4, 'Pick Place for PCB1.txt', TextIcon],
  [4, 'test.csv', TextIcon],
  [4, 'test.rep', TextIcon],
  [2, 'Components', FolderIcon, 'closed'],
  [2, 'Nets', FolderIcon, 'closed'],
];
const rowState = { 1: 'current', 3: 'selected' };
const activeTools = [
  ['Filter', FilterIcon], ['Snap', PlusIcon, 1], ['Select', SelectIcon, 1], ['Distribute', DistributeIcon, 1], ['Component', ChipIcon, 1],
  ['Route', RouteIcon, 1], ['Tune length', WaveIcon, 1], ['Via', ViaIcon, 1], ['Polygon', PolygonIcon, 1], ['Keepout', KeepoutIcon, 1],
  ['Dimension', DimensionIcon, 1], ['Text', LetterIcon], ['Line', LineIcon, 1],
];
const reportText = 'System Error.  Code: 1410.  类已存在。 at 0000000200055556.\nOUT_Drill.dll, Base Address: 0000000200000000.\n\nException Occurred In  GenerateReport';

const ProjectsPanel = () => (
  <Panel>
    <PanelHeader>
      <PanelTitle>Projects</PanelTitle>
      <IconButton $w={16} aria-label="Panel menu"><ArrowDown w={7} fill="#fff" /></IconButton>
      <IconButton $w={16} aria-label="Pin"><PinIcon /></IconButton>
      <IconButton $w={16} aria-label="Close panel"><CrossIcon /></IconButton>
    </PanelHeader>
    <PanelTools>
      <IconButton aria-label="Save document"><SaveIcon /></IconButton>
      <IconButton aria-label="Compile"><DocsIcon /></IconButton>
      <IconButton aria-label="Explore"><FolderLensIcon /></IconButton>
      <IconButton aria-label="Project options"><FolderGearIcon /></IconButton>
      <Divider />
      <IconButton $w={16} aria-label="Panel settings"><GearIcon /></IconButton>
    </PanelTools>
    <PanelBody>
      <SearchField>
        <LensIcon />
        <input type="text" placeholder="Search" aria-label="Search" />
      </SearchField>
      <Rule />
      <Tree>
        {tree.map(([depth, name, Icon, fold], i) => (
          <TreeRow key={i} $depth={depth}>
            {depth > 0 && <Twisty>{fold === 'open' ? <OpenTwisty /> : fold === 'closed' ? <ClosedTwisty /> : null}</Twisty>}
            <Icon />
            <TreeLabel $bold={depth < 2} $state={rowState[i]}>{name}</TreeLabel>
          </TreeRow>
        ))}
      </Tree>
    </PanelBody>
  </Panel>
);

const ErrorDialog = () => (
  <Dialog role="dialog" aria-labelledby="error-title">
    <DialogTitle>
      <h2 id="error-title">Error</h2>
      <CloseBox aria-label="Close window"><CrossIcon /></CloseBox>
    </DialogTitle>
    <DialogBody>
      <InfoGroup>
        <legend>Information</legend>
        <Report>
          <textarea readOnly aria-label="Information" value={reportText} />
          <ScrollTrack>
            <ScrollButton aria-label="Scroll up"><Svg w={6} h={4}><path d="M3 0l3 4H0z" fill="#777" /></Svg></ScrollButton>
            <ScrollButton aria-label="Scroll down"><Svg w={6} h={4}><path d="M3 4l3-4H0z" fill="#777" /></Svg></ScrollButton>
          </ScrollTrack>
        </Report>
      </InfoGroup>
      <p>
        By choosing Send crash report data you will submit crash/debug report<br />
        information to Altium's crash report database for development analysis.<br />
        Note that this report does not generate a Support Ticket for follow up.
      </p>
    </DialogBody>
    <DialogActions>
      <SplitButton>
        <button type="button">Close</button>
        <button type="button" aria-label="More options"><ArrowDown w={8} fill="#fff" /></button>
      </SplitButton>
    </DialogActions>
  </Dialog>
);

export default function App() {
  return (
    <Desktop>
      <GlobalStyle />
      <BrowserPage />
      <AppWindow>
        <TitleBar>
          <QuickAccess>
            {quickAccess.map(([name, Icon]) => <IconButton key={name} aria-label={name}><Icon /></IconButton>)}
          </QuickAccess>
          <WindowTitle>PCB_Project1.PrjPCB - Altium Designer (18.0)</WindowTitle>
          <GlobalSearch aria-label="Search everywhere"><LensIcon /></GlobalSearch>
        </TitleBar>
        <ToolRow>
          <Grip />
          {utilities.map(([name, Icon]) => (
            <ToolGroup key={name}>
              <IconButton aria-label={name}><Icon /></IconButton>
              <IconButton $w={18} aria-label={`${name} menu`}><ArrowDown /></IconButton>
            </ToolGroup>
          ))}
        </ToolRow>
        <MenuBar>
          {menus.map(([before, key, after]) => <MenuButton key={key}>{before}<u>{key}</u>{after}</MenuButton>)}
        </MenuBar>
        <Workbench>
          <ProjectsPanel />
          <Documents>
            <TabStrip>
              {tabs.map(([name, Icon]) => <Tab key={name} $active={name === 'PCB1.PcbDoc'}><Icon />{name}</Tab>)}
            </TabStrip>
            <Canvas>
              <BoardDrawing />
              <ActiveBar>
                {activeTools.map(([name, Icon, more]) => (
                  <ActiveTool key={name} aria-label={name} $more={more} $last={name === 'Distribute'}><Icon /></ActiveTool>
                ))}
              </ActiveBar>
            </Canvas>
          </Documents>
        </Workbench>
        <ErrorDialog />
      </AppWindow>
    </Desktop>
  );
}
